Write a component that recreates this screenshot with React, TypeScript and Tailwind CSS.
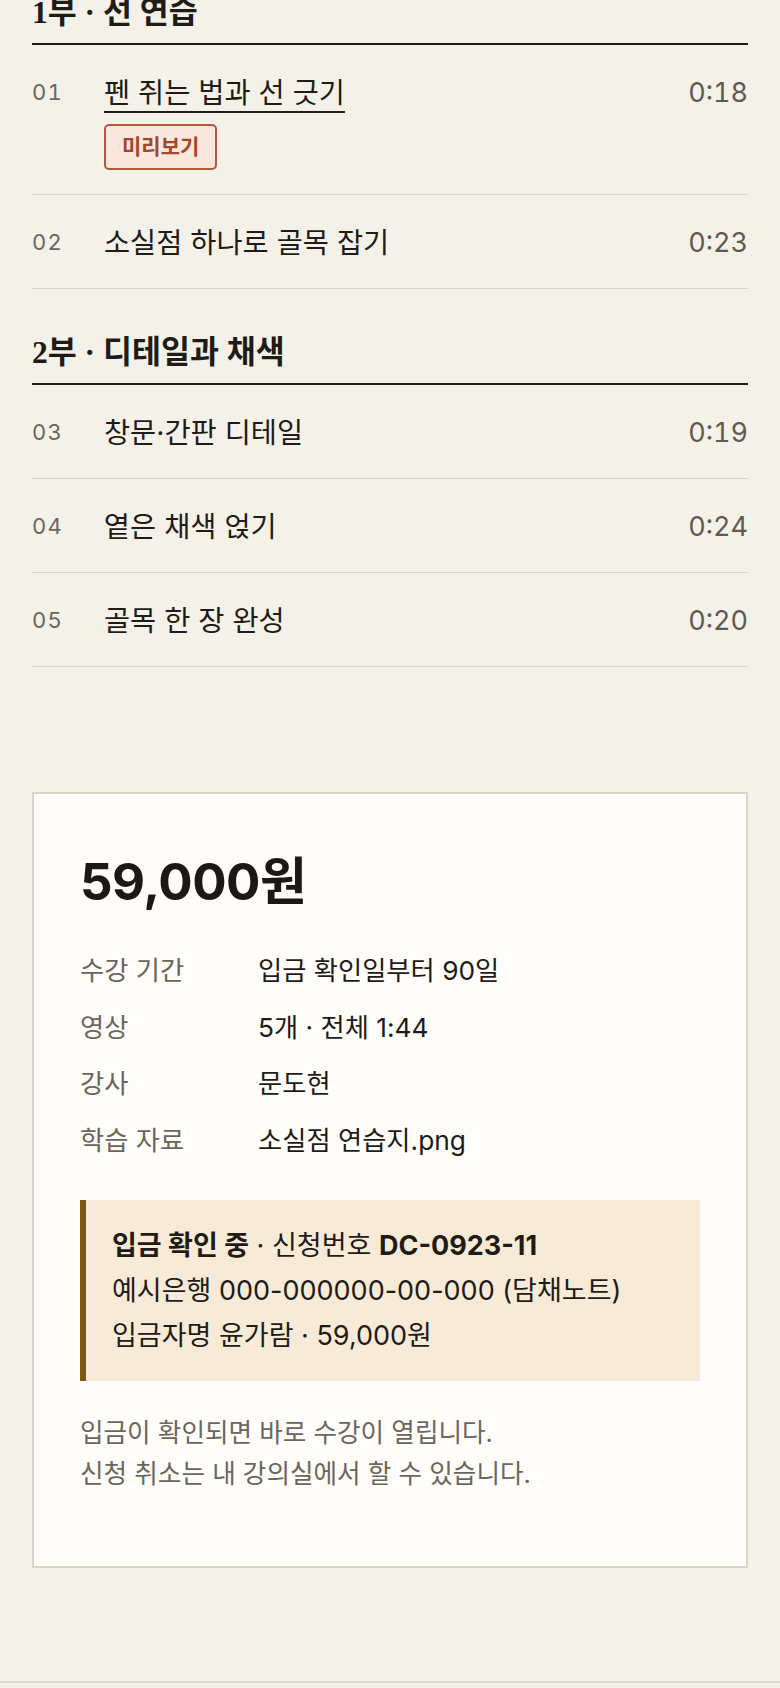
import React from "react";

interface Lesson {
  no: string;
  title: string;
  time: string;
  preview?: boolean;
}

const parts: { title: string; lessons: Lesson[] }[] = [
  {
    title: "1부 · 선 연습",
    lessons: [
      { no: "01", title: "펜 쥐는 법과 선 긋기", time: "0:18", preview: true },
      { no: "02", title: "소실점 하나로 골목 잡기", time: "0:23" },
    ],
  },
  {
    title: "2부 · 디테일과 채색",
    lessons: [
      { no: "03", title: "창문·간판 디테일", time: "0:19" },
      { no: "04", title: "옅은 채색 얹기", time: "0:24" },
      { no: "05", title: "골목 한 장 완성", time: "0:20" },
    ],
  },
];

const info = [
  ["수강 기간", "입금 확인일부터 90일"],
  ["영상", "5개 · 전체 1:44"],
  ["강사", "문도현"],
  ["학습 자료", "소실점 연습지.png"],
];

function LessonRow({ lesson }: { lesson: Lesson }) {
  return (
    <li className="flex items-start border-b border-[#d9d5c9] pt-[28px] pb-[26px]">
      <span className="w-[72px] shrink-0 text-[22px] leading-[39px] tracking-[0.06em] tabular-nums text-[#6b665d]">
        {lesson.no}
      </span>
      <div className="flex-1">
        <p
          className={
            lesson.preview
              ? "text-[28.4px] leading-[39px] text-[#1f1b17] underline decoration-2 underline-offset-[8px]"
              : "text-[28.4px] leading-[39px] text-[#1f1b17]"
          }
        >
          {lesson.title}
        </p>
        {lesson.preview && (
          <span className="mt-[12px] -mb-[2px] inline-block rounded-[5px] border-2 border-[#b05a3d] bg-[#f9e6dd] px-[16px] py-[7px] text-[21px] font-bold leading-[28px] text-[#a1472b]">
            미리보기
          </span>
        )}
      </div>
      <span className="shrink-0 text-[27px] leading-[39px] tabular-nums text-[#5f5a51]">{lesson.time}</span>
    </li>
  );
}

export default function App() {
  return (
    <div className="min-h-screen bg-[#f4f1e9] font-['Inter','Noto_Sans_CJK_KR',sans-serif] text-[#1f1b17]">
      <div className="px-[32px]">
        {parts.map((part, i) => (
          <section key={part.title} className={i === 0 ? "-mt-[7px]" : "mt-[44px]"}>
            <h2 className="border-b-2 border-[#201c18] pb-[10px] font-['Liberation_Serif','Noto_Sans_CJK_KR',serif] text-[31.5px] font-bold leading-[40px] text-[#1f1b17]">
              {part.title}
            </h2>
            <ul>
              {part.lessons.map((l) => (
                <LessonRow key={l.no} lesson={l} />
              ))}
            </ul>
          </section>
        ))}

        {/* price card */}
        <div className="mt-[125px] border-2 border-[#d8d4c6] bg-[#fefdf9] px-[46px] pt-[58px] pb-[71px]">
          <p className="text-[51px] font-bold leading-[60px] tracking-[-0.5px] text-[#1c1915]">59,000원</p>

          <dl className="mt-[40px] flex flex-col gap-[18.6px]">
            {info.map(([k, v]) => (
              <div key={k} className="flex text-[26.3px] leading-[38px]">
                <dt className="w-[178px] shrink-0 text-[#6b665d]">{k}</dt>
                <dd className="text-[#1f1b17]">{v}</dd>
              </div>
            ))}
          </dl>

          <div className="mt-[40px] border-l-[6px] border-[#7c5813] bg-[#f7ead6] py-[23px] pl-[26px] pr-[16px] text-[27px] leading-[45px] text-[#1f1b17]">
            <p>
              <b className="font-bold">입금 확인 중</b> · 신청번호 <b className="font-bold">DC-0923-11</b>
            </p>
            <p>예시은행 000-000000-00-000 (담채노트)</p>
            <p>입금자명 윤가람 · 59,000원</p>
          </div>

          <div className="mt-[31px] text-[25.6px] leading-[41.5px] text-[#6b665d]">
            <p>입금이 확인되면 바로 수강이 열립니다.</p>
            <p>신청 취소는 내 강의실에서 할 수 있습니다.</p>
          </div>
        </div>
      </div>

      <footer className="mt-[113px] h-[60px] border-t-2 border-[#dcd8cb]" />
    </div>
  );
}
